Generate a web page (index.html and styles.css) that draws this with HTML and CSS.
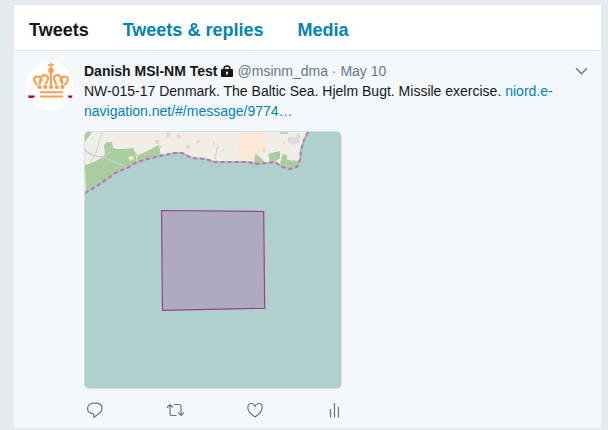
FILE: index.html
```html
<!DOCTYPE html>
<html lang="en">
<head>
<meta charset="utf-8">
<title>Tweets</title>
<link rel="stylesheet" href="styles.css">
</head>
<body>
<main class="panel">
  <nav class="tabs">
    <a class="tab tab-active">Tweets</a>
    <a class="tab" href="#replies">Tweets &amp; replies</a>
    <a class="tab" href="#media">Media</a>
  </nav>
  <article class="tweet">
    <svg class="avatar" viewBox="0 0 48 48" aria-hidden="true">
      <circle cx="24" cy="24" r="24" fill="#fff"/>
      <path d="M1.500 33.500h7.500v1l-2 1.500h-4zM41.500 33.500h5l-1 2.500h-2.500z" fill="#b01020"/>
      <g fill="#fd9c4c">
        <circle cx="25" cy="8.500" r="2.800"/>
        <circle cx="13.500" cy="25" r="2.100"/><circle cx="19.200" cy="25" r="2.100"/><circle cx="25" cy="25" r="2.100"/><circle cx="30.800" cy="25" r="2.100"/><circle cx="36.500" cy="25" r="2.100"/>
        <path d="M14 29.300h23v2h-23zM14 33.600h23v2h-23z"/>
      </g>
      <g fill="none" stroke="#fd9c4c" stroke-width="2.100">
        <path d="M25 0.500v6M22 3h6" stroke-width="1.500"/>
        <path d="M11.500 23C7 19 7 14.500 11.500 14.500c3 0 4.500 2 4 5M14 22.500c-1-7 3-10.500 6-9 3.500 1.500 2 5-.500 9M38.500 23c4.500-4 4.500-8.500 0-8.500-3 0-4.500 2-4 5M36 22.500c1-7-3-10.500-6-9-3.500 1.500-2 5 .500 9M25 11v12"/>
      </g>
    </svg>
    <div class="content">
      <header class="byline">
        <strong class="name">Danish MSI-NM Test</strong>
        <svg class="lock" viewBox="0 0 12 13" role="img" aria-label="Protected">
          <path d="M3 5V4a3 3 0 0 1 6 0v1" fill="none" stroke="#14171a" stroke-width="1.500"/>
          <rect y="4" width="12" height="8" rx="1" fill="#14171a"/>
          <path d="M6 6.500a1.200 1.200 0 0 1 .5 2.200v1.500h-1v-1.500a1.200 1.200 0 0 1 .5-2.200z" fill="#fff"/>
        </svg>
        <span class="meta">@msinm_dma · May 10</span>
        <button class="more" type="button" aria-label="More">
          <svg viewBox="0 0 12 8"><path d="M1 1l5 5 5-5" fill="none" stroke="#657786" stroke-width="1.300"/></svg>
        </button>
      </header>
      <p class="text">NW-015-17 Denmark. The Baltic Sea. Hjelm Bugt. Missile exercise. <a href="#message">niord.e-navigation.net/#/message/9774…</a></p>
      <svg class="map" viewBox="0 0 256 256" role="img" aria-label="Map of Hjelm Bugt">
        <rect width="256" height="256" fill="#b0d0d0"/>
        <path d="M0 0H223L219 8 216 18 215 28 212 35 205 37 197 35 190 30 173 32 162 30 145 30 130 30 120 27 107 26 97 21 90 21 75 24 62 27 50 31 42 36 30 41 22 47 12 54 0 61z" fill="#f1ede7"/>
        <path d="M157 0h21l2 15-8 9 1 8-17-2-3-12z" fill="#fde7d4"/>
        <path d="M0 33l7-2 13-7-1-11 3-3h5l1 6 4 1 6 0 10-1 3 6 3 1 20-10 2 11-13 3-12 4-8 5-12 5-8 6-10 7-12 7zM170 22l4 2 6 6-1 1h-10zM183 22l12-3v7l-6 4-4 0zM198 22l4 1v5l12 1-2 6-7 2-8-2-2-4zM0 0h7L0 10z" fill="#aacda0"/>
        <path d="M43 25l5-1 1 3-4 2zM50 22l3 2-2 4 2 1" fill="#e8f5aa"/>
        <path d="M0 18q8 7 18 7 12 5 24 10M18 25l8-5" fill="none" stroke="#bfd0cf" stroke-width="1.500"/>
        <path d="M17 0l-6 21-6 10M133 14l-3 11 2 5" fill="none" stroke="#d0d0cb"/>
        <path d="M82 0h4l-1 5-5 1zM203 5h11l1 6-8 2-4-3zM132 13l2 1-1 5h-2z" fill="#dddbd9"/>
        <path d="M211 2h4v4h-3z" fill="#bdeac8"/>
        <path d="M195 1h8" stroke="#9bb583" fill="none"/>
        <g fill="#f2d4bd"><path d="M70 8h4v4h-4zM75 14h2v2h-2zM92 2l4 2-1 3-3-1zM101 13h4v4h-4zM111 9l4-1v2l-3 2zM128 10h2v3h-2zM177 17l3-1 1 3-3 1zM198 10h2v2h-2zM137 17h2v2h-2z"/></g>
        <path d="M0 61L12 54 22 47 30 41 42 36 50 31 62 27 75 24 90 21 97 21 107 26 120 27 130 30 145 30 162 30 173 32 190 30 197 35 205 37 212 35 215 28 216 18 219 8 223 0" fill="none" stroke="#c8b2cb" stroke-width="2"/>
        <path d="M0 61L12 54 22 47 30 41 42 36 50 31 62 27 75 24 90 21 97 21 107 26 120 27 130 30 145 30 162 30 173 32 190 30 197 35 205 37 212 35 215 28 216 18 219 8 223 0" fill="none" stroke="#a184a4" stroke-width="2" stroke-dasharray="4 3"/>
        <path d="M76.500 78.500L178.700 79.500 179.700 176.300 77.500 178.300z" fill="#b0aac1" stroke="#944683" stroke-width="1.200"/>
      </svg>
      <footer class="actions">
        <button type="button" aria-label="Reply"><svg viewBox="0 0 18 16"><path d="M7.500 12C4 11.500 1.500 9.300 1.500 6.500c0-3.300 3-5.300 6.300-5.300h1.500c4 0 6.700 2.100 6.700 5.300 0 3.700-3.500 5.700-8 8.700z"/></svg></button>
        <button type="button" aria-label="Retweet"><svg viewBox="0 0 18 16"><path d="M1 5.500l3-3 3 3M4 3v8.500q0 2 2 2h4.500M8 2.500h5q2 0 2 2V13M12 10.500l3 3 3-3"/></svg></button>
        <button type="button" aria-label="Like"><svg viewBox="0 0 18 16"><path d="M9 15C5 12.500 1.800 9 1.800 5.300c0-2.300 1.500-3.800 3.400-3.800C7 1.500 8.300 2.800 9 4.300c.7-1.500 2-2.800 3.800-2.800 1.900 0 3.400 1.500 3.400 3.800C16.200 9 13 12.500 9 15z"/></svg></button>
        <button type="button" aria-label="View activity"><svg viewBox="0 0 18 16"><path d="M4.500 7v8.500M8.500 1v14.500M12.500 5v10.500"/></svg></button>
      </footer>
    </div>
  </article>
</main>
</body>
</html>
```

FILE: styles.css
```css
* { box-sizing: border-box; }

body {
  margin: 0;
  padding: 5px 7px 0 14px;
  background: #e3ebee;
  color: #14171a;
  font: 14px/20px "Liberation Sans", Arial, sans-serif;
}

a { color: #0084b4; text-decoration: none; }

button {
  padding: 0;
  border: 0;
  background: none;
  color: #657786;
}

svg { display: block; }

.panel { background: #fff; }

.tabs {
  display: flex;
  gap: 34px;
  padding: 15px 15px 9px;
  border-bottom: 1px solid #e1e8ed;
  font-size: 18px;
  font-weight: bold;
  line-height: 21px;
}

.tabs .tab-active { color: #14171a; }

.tweet {
  display: flex;
  gap: 10px;
  padding: 10px 13px 9px 12px;
  border-bottom: 1px solid #dfe8ec;
  background: #f4f8fb;
}

.avatar {
  flex: none;
  width: 48px;
  height: 48px;
  margin-top: 1px;
}

.content { flex: 1; min-width: 0; }

.byline { display: flex; align-items: center; }

.lock { width: 12px; height: 13px; margin: 0 5px 0 3px; }

.meta { color: #657786; }

.more { margin-left: auto; }

.more svg { width: 13px; height: 9px; }

.text { margin: 0 0 10px; }

.map {
  width: 258px;
  height: 258px;
  border: 1px solid #d3dfe3;
  border-radius: 5px;
}

.actions {
  display: flex;
  gap: 62px;
  margin-top: 12px;
  padding-left: 2px;
}

.actions svg {
  width: 18px;
  height: 18px;
  fill: none;
  stroke: currentColor;
  stroke-width: 1.2;
}
```
